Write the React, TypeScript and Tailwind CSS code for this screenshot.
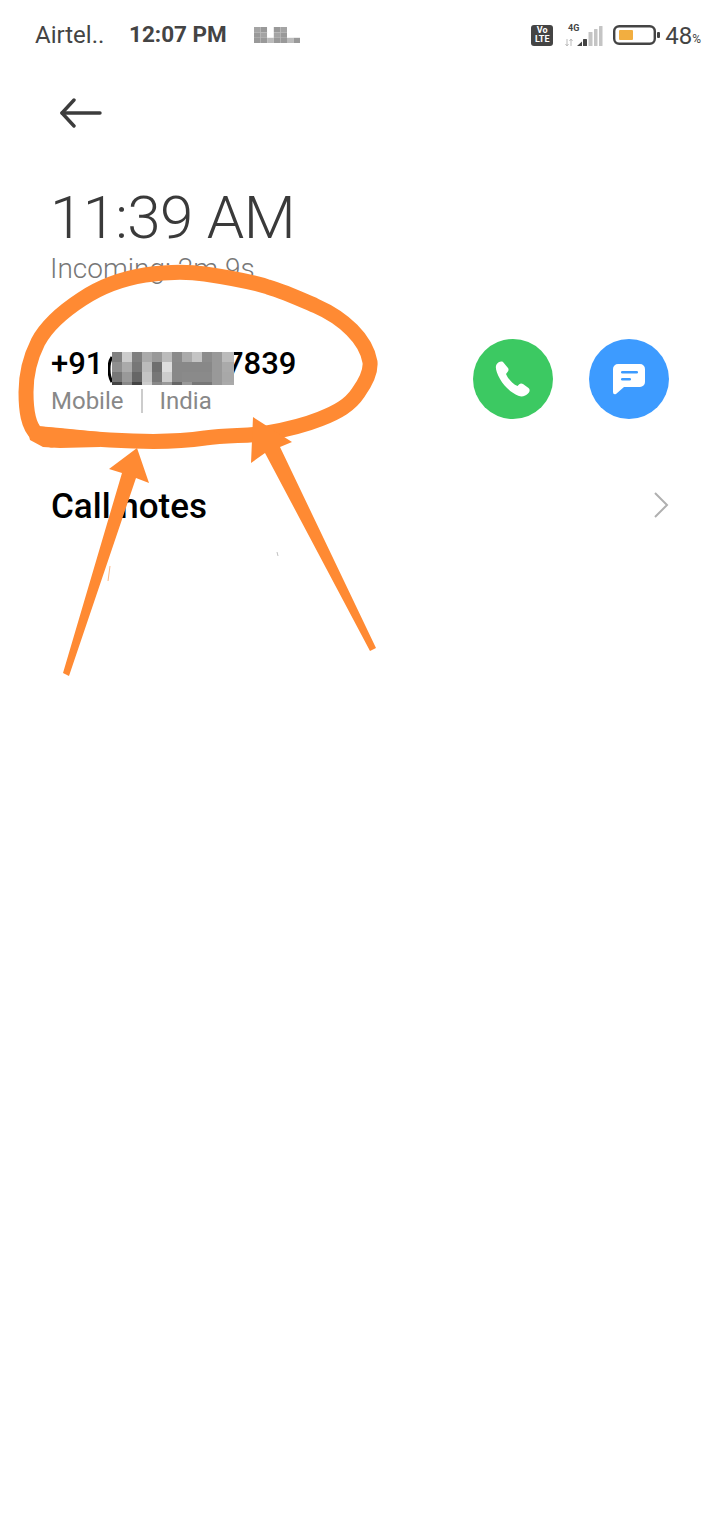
const ORANGE = "#ff8a33";

// mosaic cells for the hidden part of the phone number
const NUMBER_MOSAIC = [
  ["#808080", "#ccc", "#7f7f7f", "#aaa", "#999", "#bbb", "#8a8a8a", "#aaa", "#c4c4c4", "#8c8c8c", "#999", "#bbb"],
  ["#8f8f8f", "#aaa", "#777", "#bbb", "#6f6f6f", "#ddd", "#888", "#888", "#888", "#888", "#999", "#aaa"],
  ["#777", "#999", "#666", "#c4c4c4", "#777", "#ccc", "#888", "#8a8a8a", "#8a8a8a", "#8a8a8a", "#999", "#a8a8a8"],
  ["#444", "#888", "#444", "#ccc", "#888", "#999", "#666", "#999", "#777", "#777", "#999", "#aaa"],
];

const NAME_MOSAIC = [
  ["#a4a4a4", "#999", "#fff", "#999", "#a4a4a4", "#fff", "#fff"],
  ["#999", "#a4a4a4", "#fff", "#a4a4a4", "#999", "#fff", "#fff"],
  ["#999", "#999", "#bbb", "#999", "#999", "#bbb", "#999"],
];

function NameMosaic() {
  return (
    <svg width="46" height="16" className="shrink-0">
      {NAME_MOSAIC.map((row, y) =>
        row.map((fill, x) => (
          <rect key={`${x}-${y}`} x={x * 6.6} y={y * 5.4} width="6.6" height="5.4" fill={fill} />
        )),
      )}
    </svg>
  );
}

function NumberMosaic() {
  return (
    <svg width="126" height="33" className="relative z-10 mt-[6px] shrink-0">
      <path d="M4 5 C0 11 0 23 4 30" fill="none" stroke="#000" strokeWidth="3" />
      {NUMBER_MOSAIC.map((row, y) =>
        row.map((fill, x) => (
          <rect
            key={`${x}-${y}`}
            x={4 + x * 10}
            y={y * 10}
            width={x === 11 ? 12 : 10}
            height={y === 3 ? 3 : 10}
            fill={fill}
          />
        )),
      )}
    </svg>
  );
}

function StatusIcons() {
  return (
    <div className="flex items-center">
      <div className="flex h-[21px] w-[22px] flex-col items-center justify-center rounded-[3px] bg-[#444] text-[9px] font-bold leading-[9px] text-white">
        <span>Vo</span>
        <span>LTE</span>
      </div>
      <svg width="39" height="24" viewBox="0 0 39 24" className="ml-[11px]">
        <text x="4" y="8" fontSize="9" fontWeight="700" fill="#444" fontFamily="Roboto">4G</text>
        <path d="M3 16 V23 M1.5 21 L3 23 L4.5 21 M7 23 V16 M5.5 18 L7 16 L8.5 18" stroke="#bbb" strokeWidth="1" fill="none" />
        <path d="M13 23 L18 18.5 V23 Z" fill="#444" />
        <rect x="19" y="16" width="4" height="7" rx="0.5" fill="#444" />
        <rect x="24.5" y="9" width="4" height="14" rx="0.5" fill="#c4c4c4" />
        <rect x="30" y="6" width="3.5" height="17" rx="0.5" fill="#c4c4c4" />
        <rect x="35" y="3" width="3.5" height="20" rx="0.5" fill="#c4c4c4" />
      </svg>
      <svg width="48" height="20" viewBox="0 0 48 20" className="ml-[10px]">
        <rect x="1.2" y="1.2" width="40.6" height="17.6" rx="5" fill="none" stroke="#444" strokeWidth="2.4" />
        <rect x="6" y="5" width="14" height="10" rx="1" fill="#f2ae40" />
        <rect x="44" y="7" width="3" height="6" rx="1" fill="#444" />
      </svg>
      <span className="ml-[4px] mt-[1px] text-[24px] leading-none text-[#444]">48</span>
      <span className="mt-[7px] text-[12px] leading-none text-[#444]">%</span>
    </div>
  );
}

// the hand-drawn orange marks lying over the screen
function Scribble() {
  return (
    <svg width="720" height="700" viewBox="0 0 720 700" className="absolute left-0 top-0">
      <path
        d="M40 434 C75 438 105 440 133 441 C160 442 185 441 205 438 C230 435 250 436 267 433 C290 429 305 425 320 419 C338 412 350 405 358 393 C366 382 371 372 370 362 C368 350 362 340 352 330 C342 320 332 313 316 306 C300 299 285 292 268 287 C250 281 225 277 205 274 C185 271 165 272 145 275 C120 279 100 287 82 299 C62 312 47 325 38 342 C30 358 26 375 26 392 C26 410 28 426 37 434 C42 438 46 439 52 440"
        fill="none"
        stroke={ORANGE}
        strokeWidth="15"
        strokeLinecap="round"
        strokeLinejoin="round"
      />
      <polygon points="25,420 37,426 60,428 100,432 100,447 60,448 43,447 30,440" fill={ORANGE} />
      <polygon points="63,673 122,473 109,469 137,448 149,483 136,478 69,676" fill={ORANGE} />
      <polygon points="253,417 292,442 280,447 376,648 370,651 265,453 251,463" fill={ORANGE} />
      <path d="M110 566 L108 581" stroke={ORANGE} strokeWidth="1" opacity="0.6" />
      <path d="M277 552 L278 556" stroke="#999" strokeWidth="1" opacity="0.6" />
    </svg>
  );
}

export default function App() {
  return (
    <div className="relative h-[1520px] w-[720px] overflow-hidden bg-white font-['Roboto',sans-serif]">
      <div className="flex h-[70px] items-center justify-between pl-[35px] pr-[19px]">
        <div className="flex items-center">
          <span className="w-[94px] text-[24px] text-[#444]">Airtel..</span>
          <span className="text-[22.5px] font-bold text-[#444]">12:07 PM</span>
          <div className="ml-[27px] flex">
            <NameMosaic />
          </div>
        </div>
        <StatusIcons />
      </div>

      <div className="pl-[60px] pt-[28px]">
        <svg width="42" height="30" viewBox="0 0 42 30" className="block" fill="none" stroke="#3c3c3c" strokeWidth="3.4" strokeLinecap="round" strokeLinejoin="round">
          <path d="M14 2 L2 15 L14 28" />
          <path d="M2 15 H40" />
        </svg>
      </div>

      <div className="pl-[50px] pt-[62px]">
        <div className="text-[60px] font-light leading-[56px] tracking-[-0.6px] text-[#3a3a3a]">11:39 AM</div>
        <div className="mt-[7px] text-[28px] font-light leading-[32px] text-[#777]">Incoming: 2m 9s</div>
      </div>

      <div className="mt-[59px] flex items-center justify-between px-[51px]">
        <div>
          <div className="flex h-[36px] items-start text-[31px] font-medium leading-[36px] text-black">
            <span className="w-[57px]">+91</span>
            <NumberMosaic />
            <span className="-ml-[8px]">7839</span>
          </div>
          <div className="mt-[3px] flex items-center text-[24px] leading-[32px] text-[#888]">
            <span>Mobile</span>
            <span className="mx-[17px] h-[24px] w-[2px] bg-[#ccc]" />
            <span>India</span>
          </div>
        </div>
        <div className="-mt-[5px] flex gap-[36px]">
          <div className="flex h-[80px] w-[80px] items-center justify-center rounded-full bg-[#3cc962]">
            <svg width="36" height="36" viewBox="0 0 36 36">
              <path
                d="M8 1 C6 0 3 1 1.5 3.5 C0 6 1 11 5 18 C9 25 16 32 24 35 C27 36 31 35 33.5 32 C35 30 35 28 33.5 27 L28 23 C26.5 22 25 22.5 24 23.5 L22.5 25 C18 23 13 18 11 13 L12.5 11 C13.5 10 14 8.5 13 7 Z"
                fill="#fff"
              />
            </svg>
          </div>
          <div className="flex h-[80px] w-[80px] items-center justify-center rounded-full bg-[#3d9bff]">
            <svg width="34" height="32" viewBox="0 0 34 32">
              <path d="M6 1 H28 A5 5 0 0 1 33 6 V19 A5 5 0 0 1 28 24 H12 L4 31 Q1 32 1 29 V6 A5 5 0 0 1 6 1 Z" fill="#fff" />
              <rect x="9" y="8" width="17" height="2.6" rx="1.3" fill="#3d9bff" />
              <rect x="9" y="15" width="10" height="2.6" rx="1.3" fill="#3d9bff" />
            </svg>
          </div>
        </div>
      </div>

      <div className="mt-[68px] flex items-center justify-between px-[51px]">
        <span className="text-[35px] font-medium leading-[40px] text-black">Call notes</span>
        <svg width="16" height="28" viewBox="0 0 16 28" className="-mt-[4px]" fill="none" stroke="#b0b0b0" strokeWidth="2">
          <path d="M2 2 L14 14 L2 26" />
        </svg>
      </div>

      <Scribble />
    </div>
  );
}
